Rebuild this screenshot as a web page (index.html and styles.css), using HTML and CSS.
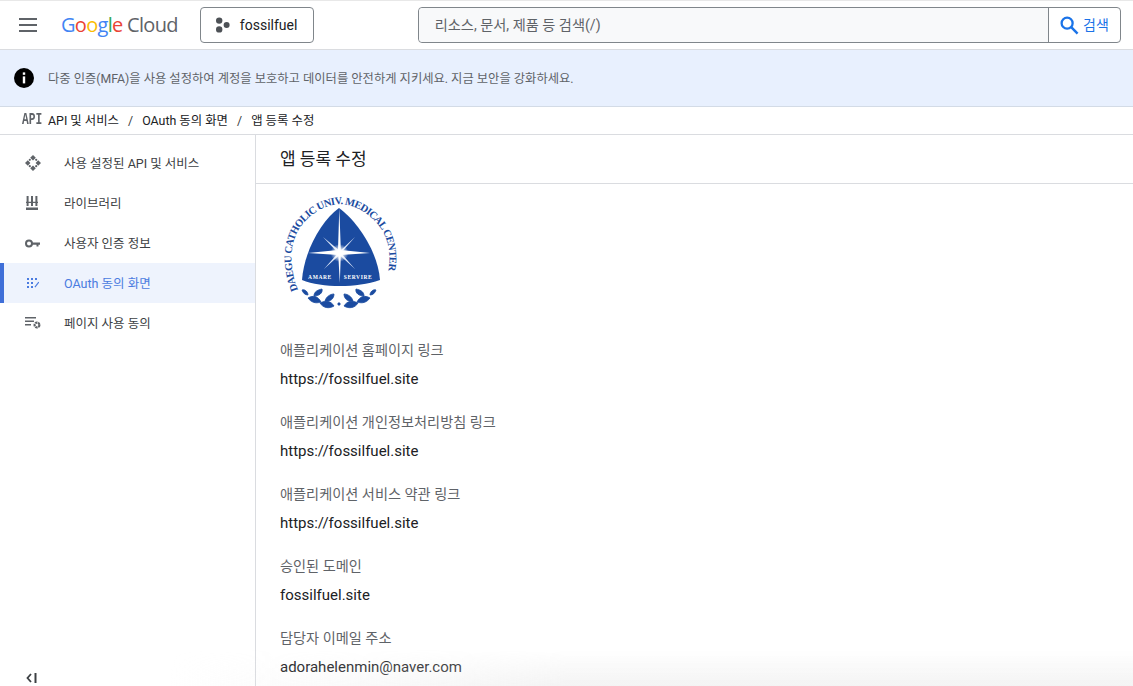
FILE: index.html
```html
<!DOCTYPE html>
<html lang="ko">

<head>
    <meta charset="UTF-8">
    <title>앱 등록 수정</title>
    <link rel="stylesheet" href="styles.css">
</head>

<body>
    <!-- 상단 바 -->
    <header class="topbar">
        <svg class="menu-icon" viewBox="0 0 18 14" width="18" height="14">
            <path d="M0 1h18M0 7h18M0 13h18" stroke="#5f6368" stroke-width="2"></path>
        </svg>
        <div class="brand"><span class="g-blue">G</span><span class="g-red">o</span><span class="g-yellow">o</span><span class="g-blue">g</span><span class="g-green">l</span><span class="g-red">e</span> <span class="brand-cloud">Cloud</span></div>
        <button class="project">
            <svg viewBox="0 0 16 16" width="16" height="16">
                <circle cx="4.2" cy="3.6" r="3.2" fill="#4d5156"></circle>
                <circle cx="11.6" cy="8" r="3" fill="#4d5156"></circle>
                <circle cx="4.2" cy="12.4" r="3.2" fill="#4d5156"></circle>
            </svg>
            <span>fossilfuel</span>
        </button>
        <div class="search">
            <div class="search-input">리소스, 문서, 제품 등 검색(/)</div>
            <div class="search-btn">
                <svg viewBox="0 0 20 20" width="19" height="19">
                    <circle cx="7.5" cy="7.5" r="5.8" fill="none" stroke="#1a73e8" stroke-width="2.4"></circle>
                    <path d="M11.8 11.8L18.5 18.5" stroke="#1a73e8" stroke-width="2.6"></path>
                </svg>
                <span>검색</span>
            </div>
        </div>
    </header>

    <!-- 알림 배너 -->
    <div class="banner">
        <svg viewBox="0 0 20 20" width="20" height="20">
            <circle cx="10" cy="10" r="10" fill="#000"></circle>
            <rect x="8.8" y="4.4" width="2.4" height="2.4" fill="#fff"></rect>
            <rect x="8.8" y="8.4" width="2.4" height="7" fill="#fff"></rect>
        </svg>
        <span>다중 인증(MFA)을 사용 설정하여 계정을 보호하고 데이터를 안전하게 지키세요. 지금 보안을 강화하세요.</span>
    </div>

    <!-- 경로 -->
    <nav class="crumbs">
        <span class="api-mark">API</span>
        <span>API 및 서비스</span>
        <span class="sep">/</span>
        <span>OAuth 동의 화면</span>
        <span class="sep">/</span>
        <span>앱 등록 수정</span>
    </nav>

    <div class="layout">
        <aside class="side">
            <ul class="side-list">
                <li class="side-item">
                    <svg class="ico-wide" viewBox="0 0 16 16" width="16" height="16" fill="#5f6368">
                        <path d="M8 0l2.800 2.800L8 5.400 5.200 2.800zM8 10.600l2.800 2.600L8 16l-2.800-2.800zM0 8l2.800-2.800L5.400 8l-2.600 2.800zM10.600 8l2.600-2.800L16 8l-2.800 2.800z"></path>
                        <circle cx="4.800" cy="4.800" r="1.100"></circle>
                        <circle cx="11.200" cy="4.800" r="1.100"></circle>
                        <circle cx="4.800" cy="11.200" r="1.100"></circle>
                        <circle cx="11.200" cy="11.200" r="1.100"></circle>
                    </svg>
                    <span>사용 설정된 API 및 서비스</span>
                </li>
                <li class="side-item">
                    <svg class="ico-lib" viewBox="0 0 12 14" width="12" height="14" fill="#5f6368">
                        <path d="M.6 0h2v10h-2zM5 0h2v10H5zM9.400 0h2v10h-2zM0 5.800h12v1.200H0zM0 11.600h12V14H0z"></path>
                    </svg>
                    <span>라이브러리</span>
                </li>
                <li class="side-item">
                    <svg class="ico-key" viewBox="0 0 15 9" width="15" height="9">
                        <circle cx="4" cy="4.500" r="3" fill="none" stroke="#5f6368" stroke-width="2"></circle>
                        <path d="M7 3.500h8v2.200h-1.500v1.800h-2V5.700H7z" fill="#5f6368"></path>
                    </svg>
                    <span>사용자 인증 정보</span>
                </li>
                <li class="side-item active">
                    <svg viewBox="0 0 12 12" width="12" height="12" fill="#4a7be0">
                        <rect x="0" y="1" width="2" height="2"></rect>
                        <rect x="4" y="1" width="2" height="2"></rect>
                        <rect x="8" y="1" width="2" height="2"></rect>
                        <rect x="0" y="5" width="2" height="2"></rect>
                        <rect x="4" y="5" width="2" height="2"></rect>
                        <rect x="0" y="9" width="2" height="2"></rect>
                        <rect x="4" y="9" width="2" height="2"></rect>
                        <path d="M7.500 9.800l3.800-5 .9.700-3.800 5z"></path>
                    </svg>
                    <span>OAuth 동의 화면</span>
                </li>
                <li class="side-item">
                    <svg class="ico-wide" viewBox="0 0 16 12" width="16" height="12" fill="#5f6368">
                        <path d="M0 0h11v1.500H0zM0 3.500h9v1.500H0zM0 7h6v1.500H0z"></path>
                        <circle cx="12" cy="8" r="2.400" fill="none" stroke="#5f6368" stroke-width="2.200" stroke-dasharray="2.200 .6"></circle>
                    </svg>
                    <span>페이지 사용 동의</span>
                </li>
            </ul>
            <div class="collapse">
                <svg viewBox="0 0 11 10" width="11" height="10">
                    <path d="M5 1L1.500 5 5 9" fill="none" stroke="#3c4043" stroke-width="1.800"></path>
                    <path d="M9.500 0v10" stroke="#3c4043" stroke-width="2"></path>
                </svg>
            </div>
        </aside>

        <main class="content">
            <h1 class="page-title">앱 등록 수정</h1>
            <div class="detail">
                <svg class="emblem" viewBox="0 0 120 120" width="120" height="120">
                    <defs>
                        <path id="ring" d="M18 97C8 72 10 48 21 33 31 20 45 12 60 11 75 12 89 20 99 33 111 48 113 72 103 97"></path>
                        <radialGradient id="glow">
                            <stop offset="0" stop-color="#fff"></stop>
                            <stop offset="0.300" stop-color="#fff"></stop>
                            <stop offset="1" stop-color="#fff" stop-opacity="0"></stop>
                        </radialGradient>
                    </defs>
                    <text class="emblem-ring"><textPath href="#ring" textLength="206" lengthAdjust="spacing">DAEGU CATHOLIC UNIV. MEDICAL CENTER</textPath></text>
                    <path d="M59 15C76 27 98 58 100 87 88 91 74 93 60 93 46 93 32 91 22 87 24 58 42 27 59 15z" fill="#1b4ba0"></path>
                    <path d="M59.300 15L60.800 57 90 60 60.800 62 59.800 90 58.300 62 28 60 58 57z" fill="#fff"></path>
                    <path d="M43 44L60 58 75 44 61 60 75 76 59.500 62 44 76 58 60z" fill="#dbe5f6"></path>
                    <circle cx="59.500" cy="60" r="9" fill="url(#glow)"></circle>
                    <text class="emblem-word" x="40" y="86" text-anchor="middle">AMARE</text>
                    <text class="emblem-word" x="78" y="86" text-anchor="middle">SERVIRE</text>
                    <g fill="#1b4ba0" stroke="#1b4ba0" stroke-width="0.8">
                        <path d="M54 113c-5 3-11 2-14-3 6-3 11-2 14 3z"></path>
                        <path d="M45 108c1-4 5-7 9-7 0 5-4 8-9 7z"></path>
                        <path d="M41 109c-6 2-10 0-13-4 5-3 10-2 13 4z"></path>
                        <path d="M34 103c0-4 3-6 8-7 1 4-3 7-8 7z"></path>
                        <path d="M28 102c-3 0-5-2-6-5 3-1 6 2 6 5z"></path>
                        <path d="M64 113c5 3 11 2 14-3-6-3-11-2-14 3z"></path>
                        <path d="M73 108c-1-4-5-7-9-7 0 5 4 8 9 7z"></path>
                        <path d="M77 109c6 2 10 0 13-4-5-3-10-2-13 4z"></path>
                        <path d="M84 103c0-4-3-6-8-7-1 4 3 7 8 7z"></path>
                        <path d="M90 102c3 0 5-2 6-5-3-1-6 2-6 5z"></path>
                        <circle cx="59" cy="111" r="1.200"></circle>
                    </g>
                </svg>
                <div class="field">
                    <div class="field-label">애플리케이션 홈페이지 링크</div>
                    <div class="field-value">https://fossilfuel.site</div>
                </div>
                <div class="field">
                    <div class="field-label">애플리케이션 개인정보처리방침 링크</div>
                    <div class="field-value">https://fossilfuel.site</div>
                </div>
                <div class="field">
                    <div class="field-label">애플리케이션 서비스 약관 링크</div>
                    <div class="field-value">https://fossilfuel.site</div>
                </div>
                <div class="field">
                    <div class="field-label">승인된 도메인</div>
                    <div class="field-value">fossilfuel.site</div>
                </div>
                <div class="field">
                    <div class="field-label">담당자 이메일 주소</div>
                    <div class="field-value">adorahelenmin@naver.com</div>
                </div>
            </div>
        </main>
    </div>
    <div class="bottom-fade"></div>
</body>

</html>
```

FILE: styles.css
```css
* {
    margin: 0;
    padding: 0;
    box-sizing: border-box;
    list-style: none;
}

html,
body {
    height: 686px;
    overflow: hidden;
}

body {
    position: relative;
    background-color: #fff;
    color: #202124;
    font-family: Roboto, "Noto Sans CJK KR", sans-serif;
    font-size: 14px;
}

/* 상단 바 */
.topbar {
    display: flex;
    align-items: center;
    height: 50px;
    padding: 0 12px 0 19px;
    border-top: 1px solid #e8e8e8;
    border-bottom: 1px solid #dadce0;
}

.menu-icon {
    flex: none;
}

.brand {
    width: 139px;
    margin-left: 24px;
    padding-bottom: 1px;
    font-family: "Open Sans", sans-serif;
    font-size: 20px;
    letter-spacing: -0.7px;
    white-space: nowrap;
}

.g-blue { color: #4285f4; }
.g-red { color: #ea4335; }
.g-yellow { color: #fbbc04; }
.g-green { color: #34a853; }

.brand-cloud {
    color: #5f6368;
}

.project {
    display: flex;
    align-items: center;
    gap: 9px;
    width: 114px;
    height: 36px;
    padding-left: 14px;
    background-color: #fff;
    border: 1px solid #80868b;
    border-radius: 4px;
    color: #202124;
    font-family: Roboto, sans-serif;
    font-size: 14px;
}

.search {
    display: flex;
    width: 704px;
    height: 36px;
    margin-left: 104px;
    border: 1px solid #80868b;
    border-radius: 4px;
}

.search-input {
    flex: 1;
    padding-left: 16px;
    background-color: #f8f9fa;
    border-right: 1px solid #80868b;
    border-radius: 4px 0 0 4px;
    color: #5f6368;
    font-size: 14.2px;
    line-height: 34px;
}

.search-btn {
    display: flex;
    align-items: center;
    gap: 4px;
    flex: none;
    width: 71px;
    padding: 0 0 2px 11px;
    color: #1a73e8;
}

.search-btn svg {
    margin-top: 2px;
}

/* 배너 */
.banner {
    display: flex;
    align-items: center;
    gap: 14px;
    height: 57px;
    padding-left: 14px;
    background-color: #e8f0fe;
    border-bottom: 1px solid #d3dbe6;
    color: #5f6368;
    font-size: 12.3px;
}

.banner span {
    padding-bottom: 1px;
}

/* 경로 */
.crumbs {
    display: flex;
    align-items: center;
    gap: 6px;
    height: 28px;
    padding: 0 0 1px 22px;
    border-bottom: 1px solid #dadce0;
    font-size: 12.4px;
}

.api-mark {
    width: 20px;
    color: #5f6368;
    font-family: "Liberation Mono", monospace;
    font-size: 16px;
    font-weight: bold;
    transform: scaleX(0.7);
    transform-origin: left center;
}

.sep {
    margin: 0 3px;
    color: #3c4043;
}

/* 본문 */
.layout {
    display: flex;
    height: 551px;
}

.side {
    position: relative;
    flex: none;
    width: 256px;
    padding-top: 8px;
    border-right: 1px solid #dadce0;
}

.side-item {
    display: flex;
    align-items: center;
    height: 40px;
    color: #3c4043;
    font-size: 12.5px;
}

.side-item svg {
    flex: none;
    margin-left: 24px;
}

.side-item .ico-wide {
    margin-left: 25px;
}

.side-item .ico-lib {
    margin-left: 26px;
}

.side-item .ico-key {
    margin-left: 25px;
}

.side-item span {
    position: absolute;
    left: 64px;
    padding-bottom: 2px;
}

.side-item.active {
    background-color: #eef3fd;
    border-left: 4px solid #3f6fd8;
    color: #4a7be0;
}

.side-item.active svg {
    margin-left: 23px;
}

.collapse {
    position: absolute;
    left: 26px;
    bottom: 3px;
    line-height: 0;
}

.content {
    flex: 1;
}

.page-title {
    height: 49px;
    padding-left: 24px;
    border-bottom: 1px solid #dadce0;
    font-size: 17px;
    font-weight: 400;
    line-height: 48px;
}

.detail {
    padding: 9px 24px 0;
}

.emblem {
    display: block;
    margin-bottom: 26px;
}

.emblem-ring {
    fill: #1b4ba0;
    font-family: "Liberation Serif", serif;
    font-size: 10.5px;
    font-weight: bold;
}

.emblem-word {
    fill: #fff;
    font-family: "Liberation Serif", serif;
    font-size: 5.5px;
    font-weight: bold;
    letter-spacing: 0.6px;
}

.field {
    height: 72px;
}

.field-label {
    height: 29px;
    color: #5f6368;
    font-size: 14.2px;
    line-height: 22px;
}

.field-value {
    color: #202124;
    font-size: 15px;
    line-height: 22px;
}

/* 하단 그림자 */
.bottom-fade {
    position: absolute;
    left: 0;
    right: 0;
    bottom: 0;
    height: 36px;
    background: linear-gradient(to right, rgba(255, 255, 255, 0) 15%, rgba(236, 236, 236, 0.6) 50%);
    -webkit-mask-image: linear-gradient(to bottom, transparent, #000);
    mask-image: linear-gradient(to bottom, transparent, #000);
    pointer-events: none;
}
```
